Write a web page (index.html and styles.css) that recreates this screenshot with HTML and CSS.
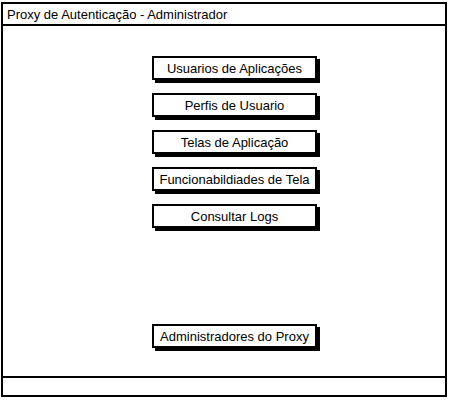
FILE: index.html
```html
<!DOCTYPE html>
<html lang="pt">
<head>
  <meta charset="UTF-8">
  <title>Proxy de Autenticação</title>
  <link rel="stylesheet" href="styles.css">
</head>
<body>
  <div class="frame">
    <div class="title-bar">
      <p>Proxy de Autenticação - Administrador</p>
    </div>
    <div class="content">
      <div class="menu">
        <button class="btn">Usuarios de Aplicações</button>
        <button class="btn">Perfis de Usuario</button>
        <button class="btn">Telas de Aplicação</button>
        <button class="btn">Funcionabildiades de Tela</button>
        <button class="btn">Consultar Logs</button>
      </div>
      <button class="btn admin">Administradores do Proxy</button>
    </div>
    <div class="status-bar"></div>
  </div>
</body>
</html>
```

FILE: styles.css
```css
* {
  font-family: "Liberation Sans", Arial, sans-serif;
  box-sizing: border-box;
}

body {
  margin: 0;
  background-color: #fff;
}

.frame {
  width: 446px;
  height: 395px;
  margin: 2px 0 0 1px;
  border: 2px solid #000;
  display: flex;
  flex-direction: column;
}

.title-bar {
  height: 22px;
  border-bottom: 2px solid #000;
}

.title-bar p {
  margin: 0;
  padding: 3px 0 0 4px;
  font-size: 13px;
  line-height: 15px;
  color: #000;
}

.content {
  height: 352px;
  border-bottom: 2px solid #000;
  display: flex;
  flex-direction: column;
  align-items: center;
  padding-top: 30px;
  padding-left: 21px;
}

.menu {
  display: flex;
  flex-direction: column;
  gap: 13px;
}

.btn {
  width: 165px;
  height: 24px;
  padding: 0;
  border: 2px solid #000;
  background-color: #fff;
  box-shadow: 3px 3px 0 #000;
  font-size: 13px;
  color: #000;
  text-align: center;
}

.admin {
  margin-top: 96px;
}

.status-bar {
  flex: 1;
}
```
